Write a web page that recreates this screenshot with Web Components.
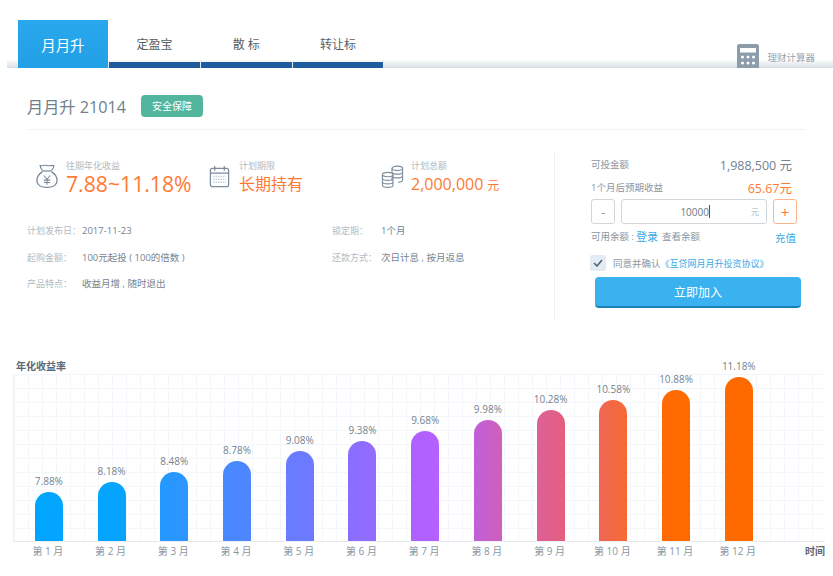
<!DOCTYPE html>
<html lang="zh"><head><meta charset="utf-8"><title>月月升</title>
<style>
html,body{margin:0;padding:0;background:#fff;}
body{width:833px;height:576px;overflow:hidden;font-family:"Open Sans","Noto Sans CJK SC",sans-serif;color:#6f7e8c;}
</style></head><body>
<yx-page>
  <yx-header slot="header">
    <yx-tab active>月月升</yx-tab><yx-tab>定盈宝</yx-tab><yx-tab>散 标</yx-tab><yx-tab>转让标</yx-tab>
  </yx-header>
  <yx-title slot="title" badge="安全保障">月月升 21014</yx-title>
  <yx-summary slot="left">
    <yx-stat slot="a" icon="bag" label="往期年化收益" size="21.2">7.88~11.18%</yx-stat>
    <yx-stat slot="b" icon="cal" label="计划期限" size="16">长期持有</yx-stat>
    <yx-stat slot="c" icon="coins" label="计划总额" size="16" unit="元">2,000,000</yx-stat>
    <yx-meta slot="d" label="计划发布日：" w="55">2017-11-23</yx-meta>
    <yx-meta slot="e" label="锁定期：" w="49">1个月</yx-meta>
    <yx-meta slot="f" label="起购金额：" w="55">100元起投 ( 100的倍数 )</yx-meta>
    <yx-meta slot="g" label="还款方式：" w="49">次日计息 , 按月返息</yx-meta>
    <yx-meta slot="h" label="产品特点：" w="55">收益月增 , 随时退出</yx-meta>
  </yx-summary>
  <yx-invest slot="right"></yx-invest>
  <yx-chart slot="chart"></yx-chart>
</yx-page>
<script>
function def(name,css,html,init){
  customElements.define(name,class extends HTMLElement{
    connectedCallback(){
      if(this.shadowRoot)return;
      const r=this.attachShadow({mode:'open'});
      r.innerHTML='<style>'+css+'</style>'+(typeof html==='function'?html(this):html);
      if(init)init(this,r);
    }
  });
}
const ICONS={
 bag:'<svg style="margin:3px 8px 0 0" width="22" height="26" viewBox="0 0 24 28" fill="none" stroke="#74879a" stroke-width="1.3"><path d="M7 8C5.500 6 4.500 4 4.500 2.500 7 3.600 9 1.500 12 2.500c3 1 5-.6 7.500 0C19.500 4 18.500 6 17 8"/><path d="M6.500 8.500h11"/><path d="M7 9.500C3.500 11.500 1 15 1 19c0 5 5 7.500 11 7.500S23 24 23 19c0-4-2.500-7.500-6-9.500"/><path d="M8.500 13.500l3.500 4 3.500-4M12 17.500v6M8.500 18.500h7M8.500 21h7" stroke-width="1.100"/></svg>',
 cal:'<svg style="margin:5px 9px 0 0" width="21" height="23" viewBox="0 0 21 24" fill="none" stroke="#7b8c9c" stroke-width="1.300"><rect x="1" y="3.500" width="19" height="19" rx="2"/><path d="M1 8.500h19M5.500 1v5M15.500 1v5" /><path d="M4 12h13M4 15h13M4 18h13" stroke="#c5ced6" stroke-width="1.400" stroke-dasharray="1.500 1"/></svg>',
 coins:'<svg style="margin:5px 7px 0 0" width="23" height="23" viewBox="0 0 23 24" fill="none" stroke="#7f90a0" stroke-width="1.200"><ellipse cx="16.500" cy="3.500" rx="5.500" ry="2.300"/><path d="M11 3.500v13M22 3.500v12.500c0 1.200-2 2-4.500 2.200M11 7.500c.5 1.200 2.800 2 5.500 2s5-.8 5.500-2M11 11.500c.5 1.200 2.800 2 5.500 2s5-.8 5.500-2"/><ellipse cx="6.500" cy="10" rx="5.500" ry="2.300" fill="#fff"/><path d="M1 10v11c0 1.300 2.500 2.300 5.500 2.300s5.500-1 5.500-2.300V10M1 13.700c0 1.300 2.500 2.300 5.500 2.300s5.500-1 5.500-2.300M1 17.400c0 1.300 2.500 2.300 5.500 2.300s5.500-1 5.500-2.300"/></svg>'
};
def('yx-page',`:host{display:block;width:833px;height:576px}
 .title{display:block;padding:0 27px 0}
 .mid{display:grid;grid-template-columns:527px 1fr;margin:21px 0 0 27px;height:169px}
 .chart{display:block;margin-top:40px}`,
 `<slot name="header"></slot><div class="title"><slot name="title"></slot></div>
 <div class="mid"><slot name="left"></slot><slot name="right"></slot></div><div class="chart"><slot name="chart"></slot></div>`);

def('yx-header',`:host{display:flex;height:68px;box-sizing:border-box;margin-left:7px;padding:20px 0 0 10.500px;gap:1px;
  background:linear-gradient(#fbfcfc,#d6dee5) left bottom/100% 8px no-repeat}
  .calc{margin-left:auto;display:flex;align-items:flex-end;gap:8px;padding-right:18px;align-self:flex-end}
  .calc span{font-size:9.500px;color:#98a3ae;line-height:14px;margin-bottom:3px}
  svg{display:block}`,
 `<slot></slot><div class="calc"><svg width="22" height="24" viewBox="0 0 22 24"><path d="M2.500 0h17A2.500 2.500 0 0 1 22 2.500V24H0V2.500A2.500 2.500 0 0 1 2.500 0z" fill="#8c9cab"/><rect x="3" y="4" width="16" height="4.500" fill="#fff"/><g fill="#fff"><circle cx="5.500" cy="13" r="1.500"/><circle cx="11" cy="13" r="1.500"/><circle cx="16.500" cy="13" r="1.500"/><circle cx="5.500" cy="19" r="1.500"/><circle cx="11" cy="19" r="1.500"/><circle cx="16.500" cy="19" r="1.500"/></g></svg><span>理财计算器</span></div>`);

def('yx-tab',`:host{display:flex;width:90.700px;box-sizing:border-box;justify-content:center;align-items:center;
  border-bottom:6px solid #1f5c9e;font-size:12px;color:#56606a;padding-top:6px}
  :host([active]){background:linear-gradient(#29a8ed,#22a0e6);color:#fff;border-bottom:0;font-size:14.400px;padding-top:0}
  span{display:block}`,
 `<span><slot></slot></span>`);

def('yx-title',`:host{display:flex;align-items:center;height:62px;box-sizing:border-box;border-bottom:1px solid #eef3f8;padding-top:24px;padding-bottom:10px;font-size:16.200px;color:#717f8d;gap:15px}
  .b{display:block;width:62px;height:22px;border-radius:4px;background:#52b69e;color:#fff;font-size:10px;line-height:22px;text-align:center}`,
 t=>`<span><slot></slot></span><span class="b">${t.getAttribute('badge')}</span>`);

def('yx-summary',`:host{display:grid;grid-template-columns:305px 1fr;grid-template-rows:67px repeat(3,26.500px);align-content:start}
 .stats{grid-column:1/3;display:grid;grid-template-columns:173px 172px 1fr;padding-left:9px;padding-top:9px;box-sizing:border-box}
 `,
 `<div class="stats"><slot name="a"></slot><slot name="b"></slot><slot name="c"></slot></div>
  <slot name="d"></slot><slot name="e"></slot><slot name="f"></slot><slot name="g"></slot><slot name="h"></slot>`);

def('yx-stat',`:host{display:flex;align-items:flex-start;height:36px}
 svg{display:block;flex:none}
 .t{display:flex;flex-direction:column}
 .l{font-size:9px;line-height:12px;color:#b2bac2}
 .v{color:#ff7a33;line-height:24px;white-space:nowrap}
 .u{font-size:12px;margin-left:4px}`,
 t=>`${ICONS[t.getAttribute('icon')]}<div class="t"><span class="l">${t.getAttribute('label')}</span><span class="v" style="font-size:${t.getAttribute('size')}px"><slot></slot>${t.getAttribute('unit')?`<span class="u">${t.getAttribute('unit')}</span>`:''}</span></div>`);

def('yx-meta',`:host{display:flex;font-size:9.500px;line-height:26.500px;color:#76838f;white-space:nowrap}
 .l{color:#b2bac2;flex:none;font-size:9px}`,
 t=>`<span class="l" style="width:${t.getAttribute('w')}px">${t.getAttribute('label')}</span><span><slot></slot></span>`);

def('yx-invest',`:host{display:block;border-left:1px solid #eef1f4;padding-left:35px;box-sizing:border-box;height:169px;width:279px;font-size:9.500px;color:#8b96a1}
 .row{display:flex;justify-content:space-between;align-items:center;width:202px}
 .row>span:first-child{margin-left:1px}
 .r1{height:24px;margin-top:1px}.r2{height:22px}
 .big{font-size:12.500px;color:#75838f}
 .or{font-size:12.500px;color:#ff7a33}
 .step{display:flex;gap:6px;height:25px;margin:1px 0 0 1px}
 .btn{width:24px;box-sizing:border-box;border:1px solid #cfd6dc;border-radius:3px;display:flex;align-items:center;justify-content:center;font-size:13px;color:#8f9aa4;background:#fff}
 .btn.p{border-color:#f9b48a;color:#ff7a33;font-size:15px}
 .inp{width:146px;box-sizing:border-box;border:1px solid #cfd6dc;border-radius:3px;display:flex;align-items:center;justify-content:flex-end;padding-right:7px;font-size:10px;color:#6c7884}
 .inp i{display:inline-block;width:1px;height:13px;background:#555;margin-right:41px}
 .inp em{font-style:normal;font-size:8px;color:#aab3bb;}
 .bal{display:flex;align-items:center;height:24px;width:205px;padding-left:1px}
 .bal a{color:#3ba9e6;font-size:11px}
 .bal .lg{margin:-1px 4px 0 2px}
 .bal .cz{margin-left:auto;font-size:10.500px;margin-top:2px}
 .chk{display:flex;align-items:center;gap:7px;height:16px;margin-top:7px}
 .box{width:16px;height:16px;border-radius:2px;background:#e3ecf4;display:flex;align-items:center;justify-content:center}
 .chk a{color:#3ba9e6;font-size:9px}
 .go{display:block;width:206px;height:31px;box-sizing:border-box;margin:6px 0 0 5px;background:#3bb2f0;border-bottom:2px solid #1e7fb5;border-radius:4px;color:#fff;text-align:center;font-size:12px;line-height:32px}`,
 `<div class="row r1"><span>可投金额</span><span class="big">1,988,500 元</span></div>
  <div class="row r2"><span>1个月后预期收益</span><span class="or">65.67元</span></div>
  <div class="step"><span class="btn">-</span><span class="inp">10000<i></i><em>元</em></span><span class="btn p">+</span></div>
  <div class="bal"><span>可用余额 :</span><a class="lg">登录</a><span>查看余额</span><a class="cz">充值</a></div>
  <div class="chk"><span class="box"><svg width="10" height="8" viewBox="0 0 10 8" fill="none" stroke="#4f5f6e" stroke-width="1.500"><path d="M1 4l3 3 5-6"/></svg></span><span>同意并确认<a>《互贷网月月升投资协议》</a></span></div>
  <span class="go">立即加入</span>`);

def('yx-chart',`:host{display:block;margin-left:13px;width:812px}
 .ti{font-size:10px;font-weight:600;color:#5d6873;line-height:12px;padding-left:3px;height:12px;margin-bottom:2px}
 .plot{height:168px;box-sizing:border-box;border-left:1px solid #eef1f5;border-bottom:1px solid #e6eaef;
   background-image:linear-gradient(#f3f6fa 1px,transparent 1px),linear-gradient(90deg,#f3f6fa 1px,transparent 1px);background-size:14px 14px;
   display:grid;grid-template-columns:repeat(12,62.720px) 1fr;grid-template-rows:167px;align-items:end;padding-left:3.500px}
 .x{display:grid;grid-template-columns:repeat(12,62.720px) 1fr;padding-left:3.500px;font-size:10px;color:#8a96a2;line-height:18px;white-space:nowrap}
 .x span{text-align:center}
 .x b{font-weight:600;color:#5d6873;text-align:right;font-size:10px}`,
 `<div class="ti">年化收益率</div><div class="plot"></div><div class="x"></div>`,
 (t,r)=>{
  const d=[['7.88%',49,'#00a5ff','#02a5ff'],['8.18%',59,'#02a5ff','#08a3ff'],['8.48%',69.500,'#2399ff','#2f95ff'],['8.78%',80,'#4689ff','#5085ff'],['9.08%',90,'#677cff','#6f79ff'],['9.38%',100,'#8a6eff','#946bff'],['9.68%',110.500,'#ae61ff','#b560ff'],['9.98%',121,'#c05fd8','#d05fbb'],['10.28%',131,'#dd6098','#e45f7c'],['10.58%',141,'#ee6755','#f76a34'],['10.88%',151.500,'#ff6a05','#ff6a00'],['11.18%',164,'#ff6a00','#ff6a00']];
  const plot=r.querySelector('.plot'),x=r.querySelector('.x');
  d.forEach((b,i)=>{
    const e=document.createElement('yx-bar');e.setAttribute('h',b[1]);e.setAttribute('a',b[2]);e.setAttribute('c',b[3]);e.textContent=b[0];plot.appendChild(e);
    const s=document.createElement('span');s.textContent='第 '+(i+1)+' 月';x.appendChild(s);
  });
  const m=document.createElement('b');m.textContent='时间';x.appendChild(m);
 });
def('yx-bar',`:host{display:flex;flex-direction:column;align-items:center;font-size:10px;color:#76838f;line-height:14px}
 .l{margin-bottom:4px;white-space:nowrap}
 .b{width:28px;border-radius:14px 14px 0 0;box-shadow:0 0 0 .5px rgba(255,255,255,.6)}`,
 t=>`<span class="l"><slot></slot></span><div class="b" style="height:${t.getAttribute('h')}px;background:linear-gradient(90deg,${t.getAttribute('a')},${t.getAttribute('c')})"></div>`);
</script>
</body></html>
